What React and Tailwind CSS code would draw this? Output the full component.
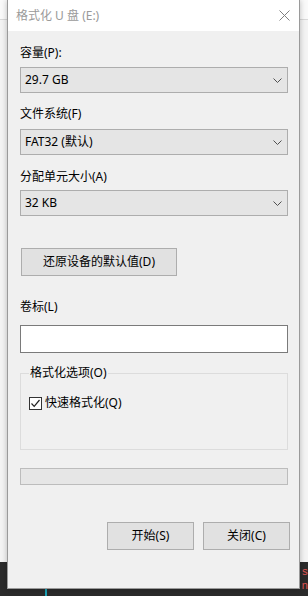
import React from 'react';

const font = { fontFamily: '"Noto Sans", "Noto Sans CJK SC", sans-serif' };

const Chevron = () => (
  <svg width="9" height="5" viewBox="0 0 9 5" className="shrink-0 mr-[1px]">
    <path d="M0.5 0.5 L4.5 4.5 L8.5 0.5" fill="none" stroke="#505050" strokeWidth="1" />
  </svg>
);

const Select = ({ value }) => (
  <div className="flex items-center justify-between w-[268px] h-[26px] bg-[#e5e5e5] border border-[#adadad] pl-[4px] pr-[4px] text-[12px] text-black">
    <span>{value}</span>
    <Chevron />
  </div>
);

const Label = ({ children, className = '' }) => (
  <div className={`h-[16px] leading-[16px] text-[12px] text-black ${className}`}>{children}</div>
);

const Button = ({ children, className = '' }) => (
  <div className={`flex items-center justify-center h-[28px] bg-[#e1e1e1] border border-[#adadad] text-[12px] text-black ${className}`}>
    {children}
  </div>
);

const App = () => {
  return (
    <div className="relative w-[308px] h-[596px] overflow-hidden" style={font}>
      {/* desktop behind the dialog */}
      <div className="h-[562px] bg-[#f4f4f4] flex flex-col">
        <div className="h-[20px] bg-[#fafafa] border-b border-[#d9d9d9]" />
      </div>
      <div className="h-[34px] bg-[#2b2b2b] flex">
        <div className="ml-[45px] mt-[18px] w-[2px] h-[16px] bg-[#1ba1b5]" />
        <div className="ml-auto mr-0 pt-[3px] text-[#e05555] text-[11px] leading-[14px] font-mono">s<br />n</div>
      </div>

      {/* dialog window */}
      <div className="absolute left-[7px] top-0 w-[293px] h-[589px] bg-[#f0f0f0] border border-[#9a9a9a] border-t-0 shadow-[0_0_6px_rgba(0,0,0,0.25)] flex flex-col">
        <div className="h-[31px] bg-white flex items-center justify-between pl-[8px] pr-[9px] shrink-0">
          <span className="text-[12px] text-[#9a9a9a]">格式化 U 盘 (E:)</span>
          <svg width="11" height="11" viewBox="0 0 11 11">
            <path d="M0.5 0.5 L10.5 10.5 M10.5 0.5 L0.5 10.5" stroke="#808080" strokeWidth="1" />
          </svg>
        </div>

        <div className="pl-[12px] flex flex-col">
          <Label className="mt-[14px]">容量(P):</Label>
          <div className="mt-[6px]"><Select value="29.7 GB" /></div>

          <Label className="mt-[13px]">文件系统(F)</Label>
          <div className="mt-[7px]"><Select value="FAT32 (默认)" /></div>

          <Label className="mt-[14px]">分配单元大小(A)</Label>
          <div className="mt-[5px]"><Select value="32 KB" /></div>

          <Button className="mt-[32px] ml-[1px] w-[156px]">还原设备的默认值(D)</Button>

          <Label className="mt-[23px]">卷标(L)</Label>
          <div className="mt-[10px] w-[268px] h-[28px] bg-white border border-[#7a7a7a]" />

          <div className="relative mt-[20px] w-[268px] h-[77px] border border-[#dcdcdc]">
            <span className="absolute left-[8px] top-[-9px] px-[1px] bg-[#f0f0f0] text-[12px] leading-[16px] text-black">格式化选项(O)</span>
            <div className="flex items-center gap-[3px] mt-[21px] ml-[8px]">
              <div className="w-[13px] h-[13px] bg-white border border-[#333] flex items-center justify-center">
                <svg width="11" height="11" viewBox="0 0 11 11">
                  <path d="M1.5 5.5 L4.2 8.3 L9.5 2" fill="none" stroke="#222" strokeWidth="1.2" />
                </svg>
              </div>
              <span className="text-[12px] leading-[16px] text-black">快速格式化(Q)</span>
            </div>
          </div>

          <div className="mt-[18px] w-[268px] h-[17px] bg-[#e6e6e6] border border-[#bcbcbc]" />

          <div className="mt-[37px] flex gap-[9px] ml-[87px]">
            <Button className="w-[87px]">开始(S)</Button>
            <Button className="w-[87px]">关闭(C)</Button>
          </div>
        </div>
      </div>
    </div>
  );
};

export default App;
